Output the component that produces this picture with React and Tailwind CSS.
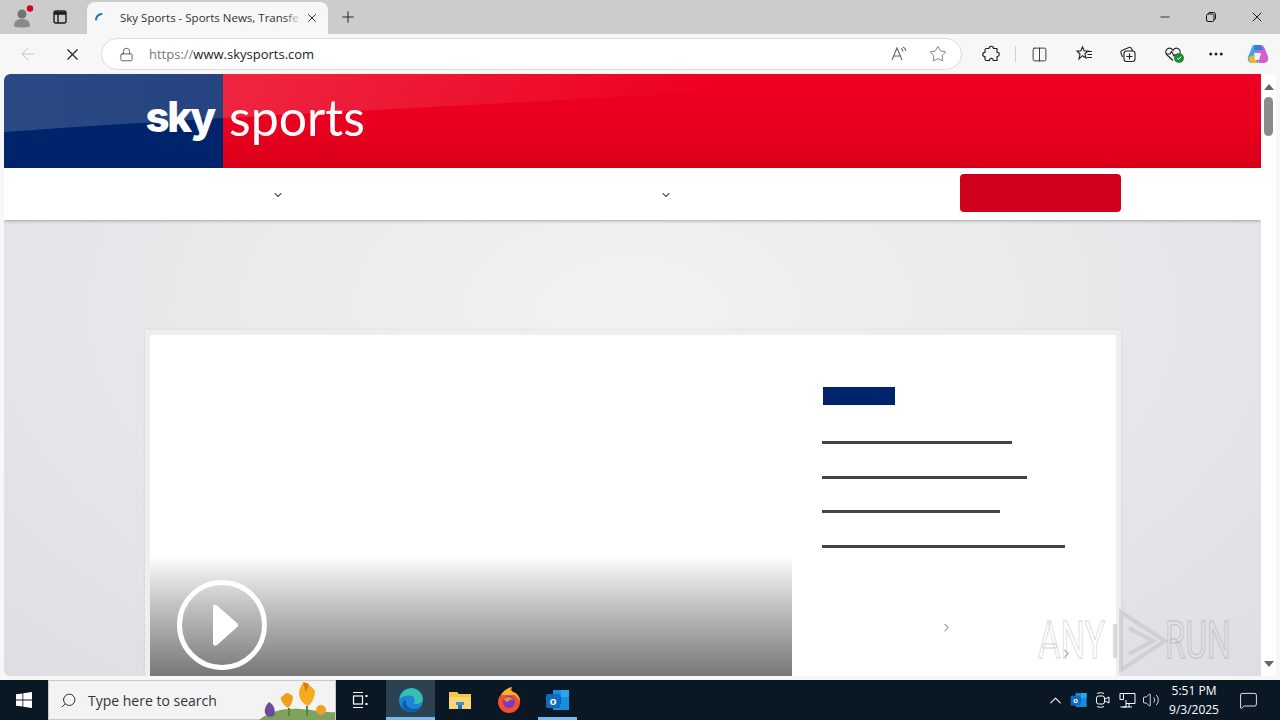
import React from 'react';
import {
  ArrowLeft, X, Plus, Lock, Star, Columns2, Minus, Ellipsis,
  ChevronDown, ChevronRight, ChevronUp, Search, Volume2, MessageSquare,
} from 'lucide-react';

function ChromeTabs() {
  return (
    <div className="flex h-[34px] items-end bg-[#cccccc]">
      <div className="flex h-[34px] w-[44px] items-center justify-center">
        <svg width="24" height="24" viewBox="0 0 24 24" className="ml-[1px]">
          <circle cx="11" cy="9" r="4.5" fill="#747474" />
          <path d="M3 21c0-5 3-7 8-7s8 2 8 7c-2 2-14 2-16 0z" fill="#8a8a8a" />
          <circle cx="19" cy="3.5" r="3.2" fill="#d9001f" />
        </svg>
      </div>
      <div className="flex h-[34px] w-[32px] items-center justify-center">
        <svg width="16" height="16" viewBox="0 0 16 16" fill="none" stroke="#1a1a1a" strokeWidth="1.4">
          <rect x="2" y="2" width="12" height="12" rx="2" />
          <path d="M2 5h12M6 5v9" />
          <path d="M2.5 2.8h11v2h-11z" fill="#1a1a1a" stroke="none" />
        </svg>
      </div>
      <div className="relative ml-[11px] flex h-[32px] w-[241px] items-center rounded-t-lg bg-[#f7f7f7] pl-[6px]">
        <svg width="16" height="16" viewBox="0 0 16 16" fill="none">
          <path d="M3 9.5C3.4 6.5 5.5 4.500 8.500 4" stroke="#1f6fb5" strokeWidth="2" strokeLinecap="round" />
        </svg>
        <span className="ml-[11px] w-[180px] whitespace-nowrap text-[11.5px] text-[#333333] [font-family:'Open_Sans',sans-serif]">
          Sky Sports - Sports News, Transfe
        </span>
        <div className="absolute left-[198px] top-0 h-full w-[16px] bg-[linear-gradient(90deg,rgba(247,247,247,0),#f7f7f7)]" />
        <X size={14} strokeWidth={1.6} className="ml-[5px] text-[#222222]" />
      </div>
      <div className="flex h-[34px] w-[40px] items-center justify-center">
        <Plus size={18} strokeWidth={1.3} className="text-[#222222]" />
      </div>
      <div className="ml-auto flex h-[34px]">
        <div className="flex w-[46px] items-center justify-center"><Minus size={14} strokeWidth={1.4} className="text-[#111111]" /></div>
        <div className="flex w-[46px] items-center justify-center">
          <svg width="12" height="12" viewBox="0 0 12 12" fill="none" stroke="#111111" strokeWidth="1">
            <rect x="1.5" y="3" width="7.5" height="7.5" rx="1.5" />
            <path d="M3.5 3V2.5a1 1 0 0 1 1-1h4a2 2 0 0 1 2 2v4a1 1 0 0 1-1 1H9" />
          </svg>
        </div>
        <div className="flex w-[46px] items-center justify-center"><X size={16} strokeWidth={1.4} className="text-[#111111]" /></div>
      </div>
    </div>
  );
}

function CopilotLogo() {
  return (
    <svg width="24" height="24" viewBox="0 0 24 24">
      <path d="M7 3h7l3 6-5 12H6C3 21 1 18 2 15z" fill="#3fa7e8" />
      <path d="M9 3h6c2 0 3 2 4 4l3 8c1 3-1 6-4 6h-5z" fill="#d65fd0" />
      <path d="M9 3h6l2 5H8z" fill="#2f7fe0" />
      <path d="M3 15l5-2 3 8H6c-2 0-4-3-3-6z" fill="#f4b42b" />
      <path d="M8 11h7l-2 7H9z" fill="#f3f3f3" />
    </svg>
  );
}

function ToolBar() {
  return (
    <div className="flex h-[40px] items-center bg-[#f7f7f7]">
      <div className="flex w-[56px] justify-center"><ArrowLeft size={20} strokeWidth={1.2} className="text-[#c4c4c4]" /></div>
      <div className="flex w-[32px] justify-center"><X size={19} strokeWidth={1.4} className="text-[#1f1f1f]" /></div>
      <div className="ml-[13px] flex h-[32px] w-[861px] items-center rounded-full border border-[#dcdcdc] bg-white">
        <Lock size={15} strokeWidth={1.3} className="ml-[17px] text-[#444444]" />
        <span className="ml-[15px] mt-[1px] text-[13px] text-[#222222] [font-family:'Open_Sans',sans-serif]">
          <span className="text-[#777777]">https://</span>www.skysports.com
        </span>
        <svg width="18" height="18" viewBox="0 0 18 18" fill="none" stroke="#666666" strokeWidth="1.1" className="ml-auto">
          <path d="M2 15 7 3l5 12M4 11h6" />
          <path d="M11 3.5c1.2.6 1.8 1.6 2 3M13 2c1.7.9 2.6 2.300 2.800 4" />
        </svg>
        <Star size={18} strokeWidth={1.1} className="ml-[21px] mr-[14px] text-[#666666]" />
      </div>
      <div className="ml-[19px] flex w-[20px] justify-center">
        <svg width="18" height="18" viewBox="0 0 18 18" fill="none" stroke="#222222" strokeWidth="1.2" strokeLinejoin="round">
          <path d="M7 3.500c0-3 4.500-3 4.500 0H15v3.800c3-.6 3 4.700 0 4.200V15.500h-3.800c.6-2.800-4.200-2.800-3.700 0H4.500c-1 0-1.500-.6-1.500-1.500v-2.500c-3 .5-3-4.500 0-4V5c0-.9.5-1.500 1.500-1.500z" />
        </svg>
      </div>
      <div className="ml-[14px] h-[16px] w-px bg-[#cfcfcf]" />
      <div className="ml-[13px] flex w-[20px] justify-center"><Columns2 size={17} strokeWidth={1.2} className="text-[#222222]" /></div>
      <div className="ml-[25px] flex w-[20px] justify-center">
        <svg width="18" height="18" viewBox="0 0 18 18" fill="none" stroke="#222222" strokeWidth="1.1">
          <path d="M7.500 2 9.200 6H13l-3 2.800 1 4.200-3.500-2.300L4 14l1-5L2 6h3.800z" />
          <path d="M12 6.500h5M12.500 9.500H17M12 12.500h5" />
        </svg>
      </div>
      <div className="ml-[24px] flex w-[20px] justify-center">
        <svg width="18" height="18" viewBox="0 0 18 18" fill="none" stroke="#222222" strokeWidth="1.1">
          <rect x="5" y="6" width="11" height="10.500" rx="2.500" />
          <path d="M10.500 8.500v6M7.500 11.500h6" />
          <path d="M3.500 12 2 8c-.4-1.200.2-2.400 1.400-2.800L10 2.500c1-.4 2 0 2.500 1L13.500 6" />
        </svg>
      </div>
      <div className="relative ml-[25px] flex w-[20px] justify-center">
        <svg width="18" height="18" viewBox="0 0 18 18" fill="none" stroke="#222222" strokeWidth="1.1">
          <path d="M9 15.500 3 10C1 8 1.500 4.500 4 3.500c2-.8 4 0 5 2 1-2 3-2.800 5-2 2.500 1 3 4.500 1 6.500" />
          <path d="M1.500 9H6l1.500-2.500L10 11l1.500-2" />
        </svg>
        <div className="absolute left-[11px] top-[8px] flex h-[10px] w-[10px] items-center justify-center rounded-full bg-[#1f8a3b]">
          <svg width="6" height="6" viewBox="0 0 6 6" fill="none" stroke="white" strokeWidth="1"><path d="M1 3l1.500 1.500L5 1.500" /></svg>
        </div>
      </div>
      <div className="ml-[23px] flex w-[20px] justify-center"><Ellipsis size={18} strokeWidth={2} className="text-[#222222]" /></div>
      <div className="ml-[20px] flex w-[24px] justify-center"><CopilotLogo /></div>
    </div>
  );
}

function Banner() {
  return (
    <div className="relative flex h-[94px] overflow-hidden rounded-tl-md">
      <div className="flex w-[219px] justify-end bg-[#00246b]">
        <span className="relative z-10 mr-[9px] mt-[16px] text-[42px] font-extrabold leading-[54px] tracking-[-0.055em] text-white [font-family:Inter,sans-serif]">sky</span>
      </div>
      <div className="flex flex-1 bg-[linear-gradient(180deg,#ef0020_0%,#e8001e_60%,#d80019_100%)]">
        <span className="relative z-10 ml-[6px] mt-[13px] text-[50px] font-normal leading-[60px] text-white [font-family:Lato,sans-serif]">sports</span>
      </div>
      <svg className="absolute inset-0" width="1257" height="94" viewBox="0 0 1257 94">
        <defs>
          <linearGradient id="gloss" x1="0" y1="0" x2="1" y2="0">
            <stop offset="0" stopColor="#ffffff" stopOpacity="0.17" />
            <stop offset="0.35" stopColor="#ffffff" stopOpacity="0.14" />
            <stop offset="1" stopColor="#ffffff" stopOpacity="0" />
          </linearGradient>
        </defs>
        <path d="M0 0H720L700 18C500 30 220 42 0 58z" fill="url(#gloss)" />
      </svg>
    </div>
  );
}

function NavRow() {
  return (
    <div className="relative flex h-[52px] bg-white shadow-[0_1px_3px_rgba(0,0,0,0.3)]">
      <ChevronDown size={12} strokeWidth={2.2} className="ml-[268px] mt-[21px] text-[#555555]" />
      <ChevronDown size={12} strokeWidth={2.2} className="ml-[376px] mt-[21px] text-[#555555]" />
      <div className="ml-[288px] mt-[6px] h-[38px] w-[161px] rounded-sm bg-[#d0021b]" />
    </div>
  );
}

function HeroCard() {
  const lines = [
    { width: 'w-[190px]', gap: 'mt-[36px]' },
    { width: 'w-[205px]', gap: 'mt-[32px]' },
    { width: 'w-[178px]', gap: 'mt-[31px]' },
    { width: 'w-[243px]', gap: 'mt-[32px]' },
  ];

  return (
    <div className="ml-[141px] h-[346px] w-[976px] border-[5px] border-b-0 border-[#eeeef1] bg-white shadow-[0_0_3px_rgba(0,0,0,0.08)]">
      <div className="flex h-full">
        <div className="flex w-[642px] flex-col justify-end">
          <div className="flex h-[121px] items-end bg-[linear-gradient(180deg,#ffffff_0%,#c4c4c4_40%,#777777_100%)] pb-[6px] pl-[27px]">
            <svg width="90" height="90" viewBox="0 0 90 90" fill="none">
              <circle cx="45" cy="45" r="42.500" stroke="white" strokeWidth="5" />
              <path d="M36 27c0-2 2-3 4-1.500L60 43c1.500 1.300 1.500 3 0 4.300L40 65c-2 1.500-4 .5-4-1.500z" fill="white" />
            </svg>
          </div>
        </div>
        <div className="relative flex-1 pl-[30px] pt-[52px]">
          <div className="ml-px h-[18px] w-[72px] bg-[#00246b]" />
          {lines.map((line) => (
            <div key={line.width} className={`${line.gap} h-[3px] ${line.width} bg-[#444444]`} />
          ))}
          <ChevronRight size={13} strokeWidth={1.6} className="ml-[118px] mt-[73px] text-[#555555]" />
          <ChevronRight size={13} strokeWidth={1.6} className="ml-[238px] mt-[13px] text-[#555555]" />
        </div>
      </div>
    </div>
  );
}

function ScrollBar() {
  return (
    <div className="flex w-[15px] flex-col items-center justify-between bg-white pb-[9px] pt-[10px]">
      <div className="flex w-full flex-1 flex-col items-center">
        <div className="h-0 w-0 border-x-[5px] border-b-[6px] border-x-transparent border-b-[#666666]" />
        <div className="mt-[7px] h-[39px] w-[9px] rounded-full bg-[#8a8a8a]" />
      </div>
      <div className="h-0 w-0 border-x-[5px] border-t-[6px] border-x-transparent border-t-[#666666]" />
    </div>
  );
}

function Watermark() {
  return (
    <div className="absolute left-[1038px] top-[608px] flex h-[66px] items-center opacity-60">
      <span className="w-[70px] origin-left scale-x-[0.66] text-[52px] font-normal leading-none text-transparent [-webkit-text-stroke:1px_#bdbdbd] [font-family:Roboto,sans-serif]">ANY</span>
      <svg width="58" height="66" viewBox="0 0 58 66" fill="none" stroke="#c6c6c6" strokeWidth="4" className="ml-[3px]">
        <path d="M10 4 54 33 10 62z" />
        <path d="M4 16v34M18 20l24 13-24 13" />
      </svg>
      <span className="-ml-[4px] w-[68px] origin-left scale-x-[0.64] text-[52px] font-normal leading-none text-transparent [-webkit-text-stroke:1px_#a8a8a8] [font-family:Roboto,sans-serif]">RUN</span>
    </div>
  );
}

function Flowers() {
  return (
    <svg width="80" height="40" viewBox="0 0 80 40" className="ml-auto">
      <path d="M4 40c12-10 28-12 42-11s24 4 34 3v8z" fill="#7ea15c" />
      <path d="M14 22c5 3 7 8 5 14-4 2-8 0-9-3-1-4 1-8 4-11z" fill="#6b4a9c" />
      <path d="M31 13c4 0 6 3 7 3 0 5-2 10-5 12-3-2-8-7-7-11 2-1 3-2 5-4z" fill="#ef9f1a" />
      <path d="M49 2c3 2 9 5 11 9 0 7-4 13-7 15-5-2-9-7-9-13 0-4 3-9 5-11z" fill="#f4ab1f" />
      <path d="M48 2l3 10 3-8z" fill="#d9760e" />
      <circle cx="66" cy="30" r="5" fill="#f0a020" />
      <path d="M34 28v8M52 26v10" stroke="#4f8a3c" strokeWidth="2" />
    </svg>
  );
}

function EdgeLogo() {
  return (
    <svg width="26" height="26" viewBox="0 0 26 26">
      <circle cx="13" cy="13" r="12" fill="#1b86d8" />
      <path d="M1.500 12C3 4 10 0 16 1.500c6 1.500 9.500 7 8.500 12-1 3-6 4-9 3 3-3 1-8-4-8-4 0-8 1-10.500 3.500z" fill="#35c1b0" />
      <path d="M8 15c0 4 3 7 8 7 3 0 5-1 7-3-2 4-6 6-10 6C7 25 3 20 5 15c1-2 3-3 3 0z" fill="#0f5da8" />
    </svg>
  );
}

function FolderLogo() {
  return (
    <svg width="24" height="22" viewBox="0 0 24 22">
      <path d="M1 3h8l2 2h12v15H1z" fill="#f2c94c" />
      <path d="M1 8h22v12H1z" fill="#f8d775" />
      <path d="M8 13h8v3H8z" fill="#3a8fd6" />
      <path d="M10 16h4v4h-4z" fill="#2f6fb0" />
    </svg>
  );
}

function FirefoxLogo() {
  return (
    <svg width="24" height="26" viewBox="0 0 24 26">
      <circle cx="12" cy="15" r="11" fill="#f0502c" />
      <path d="M4 8c2-4 6-7 11-8-1 2-1 4 1 5 4 1 7 5 7 9L18 8z" fill="#fbb02c" />
      <circle cx="12" cy="15" r="6" fill="#7a3bc2" />
      <path d="M7 12c3-3 8-2 10 1-3-1-5 0-6 2-2 0-3-1-4-3z" fill="#f58a3c" />
    </svg>
  );
}

function OutlookLogo({ size = 26 }) {
  return (
    <svg width={size} height={size} viewBox="0 0 26 26">
      <path d="M8 3h16v20H8z" fill="#1490df" />
      <path d="M16 3h8v7h-8z" fill="#28a8ea" />
      <path d="M8 10h8v7H8z" fill="#0a5ea8" />
      <rect x="1" y="7" width="14" height="14" rx="1.500" fill="#0f6cbd" />
      <text x="8" y="18" textAnchor="middle" fontSize="11" fontWeight="700" fill="white" fontFamily="Liberation Sans, sans-serif">o</text>
    </svg>
  );
}

function TaskBar() {
  return (
    <div className="flex h-[40px] bg-[#0a1826]">
      <div className="flex w-[48px] items-center justify-center">
        <svg width="16" height="16" viewBox="0 0 16 16" fill="white">
          <path d="M0 2.300 6.500 1.400v6.200H0zM7.300 1.300 16 0v7.600H7.300zM0 8.400h6.500v6.200L0 13.700zM7.300 8.400H16V16l-8.700-1.300z" />
        </svg>
      </div>
      <div className="flex h-[40px] w-[288px] items-center border border-[#c9c9c9] bg-[#f3f3f3]">
        <Search size={17} strokeWidth={1.3} className="ml-[11px] -scale-x-100 text-[#222222]" />
        <span className="ml-[11px] whitespace-nowrap text-[14px] text-[#333333] [font-family:'Open_Sans',sans-serif]">Type here to search</span>
        <Flowers />
      </div>
      <div className="flex w-[50px] items-center justify-center pr-[2px]">
        <svg width="16" height="18" viewBox="0 0 16 18" fill="none" stroke="white" strokeWidth="1.200">
          <path d="M1 1.500h10M1 16.500h10" />
          <rect x="1.500" y="5" width="9" height="8" />
          <path d="M14.500 4v2M14.500 12v2" strokeWidth="2" />
        </svg>
      </div>
      <div className="flex w-[49px] items-center justify-center border-b-[3px] border-[#76b9ed] bg-[#2d4250] pt-[3px]"><EdgeLogo /></div>
      <div className="flex w-[49px] items-center justify-center"><FolderLogo /></div>
      <div className="flex w-[49px] items-center justify-center"><FirefoxLogo /></div>
      <div className="w-[49px] px-[5px]">
        <div className="flex h-full items-center justify-center border-b-[3px] border-[#76b9ed] pt-[3px]"><OutlookLogo /></div>
      </div>

      <div className="ml-auto flex items-center">
        <div className="flex w-[24px] justify-center"><ChevronUp size={19} strokeWidth={1.3} className="text-white" /></div>
        <div className="flex w-[24px] justify-center"><OutlookLogo size={18} /></div>
        <div className="flex w-[24px] justify-center">
          <svg width="16" height="18" viewBox="0 0 16 18" fill="none" stroke="white" strokeWidth="1">
            <rect x="1.500" y="5" width="8" height="8" rx="2" />
            <path d="M10 8l4-2v6l-4-2M2 2.500c2-1 5-1 7 0M2 15.500c2 1 5 1 7 0" />
          </svg>
        </div>
        <div className="flex w-[24px] justify-center">
          <svg width="17" height="17" viewBox="0 0 17 17" fill="none" stroke="white" strokeWidth="1">
            <path d="M4 1.500h12v10H7M1 1.500h3.500v6H1zM7 8v7H1.500M4 15h9M10 11.500V15" />
          </svg>
        </div>
        <div className="flex w-[24px] justify-center"><Volume2 size={18} strokeWidth={1.1} className="text-white" /></div>
        <div className="flex w-[62px] flex-col items-center text-[12px] leading-[19px] text-white [font-family:'Open_Sans',sans-serif]">
          <span>5:51 PM</span>
          <span>9/3/2025</span>
        </div>
        <div className="flex w-[46px] justify-center">
          <MessageSquare size={19} strokeWidth={1.1} className="text-white" />
        </div>
        <div className="w-[9px]" />
      </div>
    </div>
  );
}

export default function App() {
  return (
    <div className="relative flex h-[720px] w-[1280px] flex-col overflow-hidden bg-white">
      <ChromeTabs />
      <ToolBar />
      <div className="flex h-[606px] bg-[#f7f7f7] pb-[4px] pl-[4px]">
        <div className="w-[1257px] overflow-hidden rounded-l-md">
          <Banner />
          <NavRow />
          <div className="h-[456px] bg-[radial-gradient(ellipse_at_50%_20%,#f2f2f3_0%,#e9e9ec_50%,#dddde3_100%)] pt-[110px]">
            <HeroCard />
          </div>
        </div>
        <ScrollBar />
      </div>
      <TaskBar />
      <Watermark />
    </div>
  );
}
